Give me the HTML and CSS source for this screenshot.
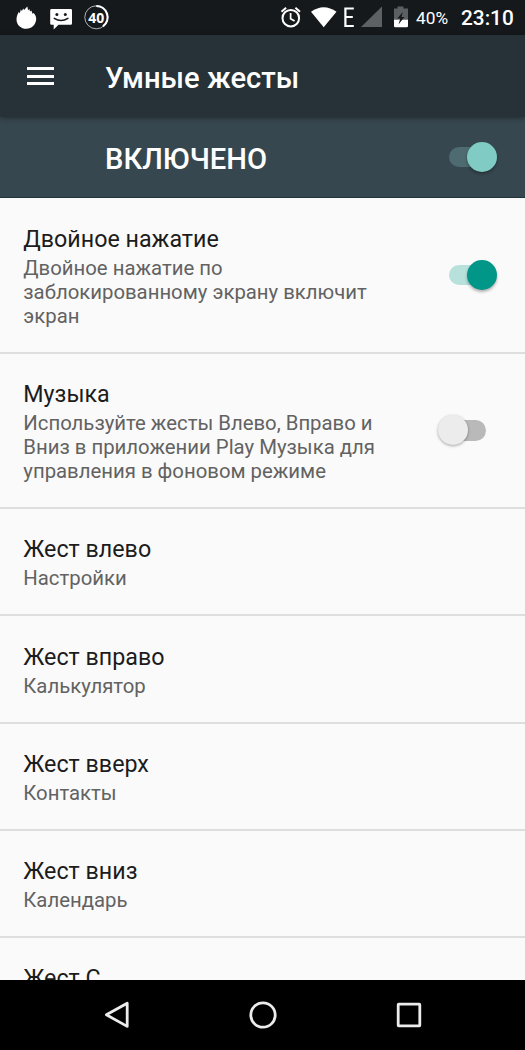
FILE: index.html
```html
<!DOCTYPE html>
<html lang="ru">
<head>
<meta charset="utf-8">
<title>Умные жесты</title>
<link rel="stylesheet" href="styles.css">
</head>
<body>
<div class="screen">
  <div class="status">
    <svg class="status-left" width="110" height="35" viewBox="0 0 110 35">
      <path fill="#fff" d="M16.500 19.500c0-3.500 1.200-5.500 2.300-7.500l1 1.200 1-3.700 1.100 1.500 1.300-2.500.9 1.500 3.200-3.500.8 3.800 1.300-1.300.6 2.600 1.400-1.200 1.100 3.400 1.100-.8c1.900 2 2.700 4.200 2.600 6.300-.4 5.400-4.500 9.500-9.800 9.500S16.500 25.200 16.500 19.500z"/>
      <path fill="#fff" d="M51.500 9h19.200q1.300 0 1.300 1.300v13.200q0 1.300-1.300 1.300H58.500L53.700 29.500V24.800H51.500q-1.300 0-1.300-1.300V10.300Q50.200 9 51.500 9z"/>
      <circle cx="56.900" cy="14.500" r="1.500" fill="#15191c"/><circle cx="65.300" cy="14.500" r="1.500" fill="#15191c"/>
      <path d="M54.300 18.300q6.800 4.600 13.600 0" fill="none" stroke="#15191c" stroke-width="1.500" stroke-linecap="round"/>
      <circle cx="96.300" cy="17.300" r="11.500" fill="none" stroke="#d5d5d5" stroke-width=".8"/>
      <path d="M96.300 6A11.300 11.300 0 0 1 103 26.400" fill="none" stroke="#fff" stroke-width="2.200"/>
      <text class="ring-text" x="96.300" y="22.500" text-anchor="middle" textLength="16" lengthAdjust="spacingAndGlyphs">40</text>
    </svg>
    <svg class="status-right" width="140" height="35" viewBox="275 0 140 35">
      <g fill="none" stroke="#fff" stroke-width="2">
        <circle cx="290.800" cy="18.200" r="8.300"/>
        <path stroke-width="1.700" d="M290.600 13v5.700l4 2.400"/>
        <path d="M281.500 11.700l4.600-4M300 11.700l-4.600-4"/>
      </g>
      <path fill="#fff" d="M311 11.800Q323.700 2.600 336.500 11.800L323.700 27.200z"/>
      <path fill="none" stroke="#fff" stroke-width="2.200" d="M353.800 8.500H345.400V26H353.800M345.400 17H352.800"/>
      <path fill="#5e6163" d="M382 6.500V27H361z"/>
      <path fill="#5c5f61" d="M397.500 6.500h6v2h4.500V20H394V8.500h3.500z"/>
      <path fill="#fff" d="M394 19.700h14V26q0 1.300-1.300 1.300h-11.400Q394 27.300 394 26z"/>
      <path fill="#15191c" d="M402.800 12l-5.500 6.500h3l-1.800 6 5.900-7.500h-3z"/>
    </svg>
    <span class="percent">40%</span>
    <span class="clock">23:10</span>
  </div>
  <header class="appbar">
    <div class="menu"><i></i><i></i><i></i></div>
    <h1>Умные жесты</h1>
  </header>
  <div class="master">
    <span>ВКЛЮЧЕНО</span>
    <div class="switch on dark"><b></b></div>
  </div>
  <main class="list">
    <section class="row tall">
      <div class="copy"><h2>Двойное нажатие</h2><p>Двойное нажатие по<br>заблокированному экрану включит<br>экран</p></div>
      <div class="switch on"><b></b></div>
    </section>
    <section class="row tall">
      <div class="copy"><h2>Музыка</h2><p>Используйте жесты Влево, Вправо и<br>Вниз в приложении Play Музыка для<br>управления в фоновом режиме</p></div>
      <div class="switch off"><b></b></div>
    </section>
    <section class="row"><div class="copy"><h2>Жест влево</h2><p>Настройки</p></div></section>
    <section class="row"><div class="copy"><h2>Жест вправо</h2><p>Калькулятор</p></div></section>
    <section class="row"><div class="copy"><h2>Жест вверх</h2><p>Контакты</p></div></section>
    <section class="row"><div class="copy"><h2>Жест вниз</h2><p>Календарь</p></div></section>
    <section class="row"><div class="copy"><h2>Жест C</h2></div></section>
  </main>
  <nav class="navbar">
    <svg width="30" height="30" viewBox="0 0 30 30"><path d="M25.200 3.200v23.200L4.400 14.800z"/></svg>
    <svg width="30" height="30" viewBox="0 0 30 30"><circle cx="15" cy="15" r="12.200"/></svg>
    <svg width="30" height="30" viewBox="0 0 30 30"><rect x="4.200" y="4.200" width="21.600" height="21.600" rx=".5"/></svg>
  </nav>
</div>
</body>
</html>
```
FILE: styles.css
```css
* { box-sizing: border-box; }
body { margin: 0; font-family: Roboto, "Liberation Sans", sans-serif; }
h1, h2, p { margin: 0; }
.screen { width: 525px; height: 1050px; display: flex; flex-direction: column; overflow: hidden; background: #fafafa; }
.status { height: 35px; flex: none; display: flex; align-items: center; background: #15191c; color: #fff; }
.status svg { flex: none; }
.status-right { margin-left: 165px; }
.ring-text { font: 700 15px "Open Sans", "Noto Sans", sans-serif; fill: #fff; }
.percent { width: 46px; font-size: 17.300px; padding: 2px 0 0 1px; line-height: 33px; }
.clock { font-size: 20.800px; font-weight: 500; line-height: 33px; padding-top: 2px; }
.appbar { height: 82px; flex: none; display: flex; align-items: center; padding-left: 27px; background: #263238; color: #fff; box-shadow: 0 1px 5px rgba(0,0,0,.4); z-index: 1; }
.menu { width: 27px; display: flex; flex-direction: column; gap: 4.500px; margin-right: 51px; }
.menu i { height: 3px; background: #fff; }
.appbar h1 { font-size: 29.170px; font-weight: 500; line-height: 34px; padding-top: 4px; }
.master { height: 81px; flex: none; display: flex; align-items: center; justify-content: space-between; padding: 0 28px 0 105px; background: #37474f; color: #fff; font-size: 29.170px; font-weight: 500; border-bottom: 1px solid #22323a; }
.master span { padding-top: 4px; }
.list { flex: 1; min-height: 0; overflow: hidden; padding-top: .8px; }
.row { height: 107.200px; display: flex; align-items: flex-start; justify-content: space-between; padding: 26.200px 28px 0 23.300px; border-bottom: 2px solid #dedede; }
.row.tall { height: 155.200px; }
.row h2 { font-size: 23.250px; font-weight: 400; line-height: 28px; color: #1c1c1c; white-space: nowrap; }
.row p { margin-top: 3px; font-size: 20.330px; line-height: 24px; color: #626262; white-space: nowrap; }
.switch { position: relative; flex: none; width: 48px; height: 30px; display: flex; align-items: center; }
.switch::before { content: ""; width: 37px; height: 20.500px; border-radius: 11px; background: #b8e1dc; }
.switch b { position: absolute; right: 0; top: 0; width: 30px; height: 30px; border-radius: 50%; background: #009688; box-shadow: 0 2px 3px rgba(0,0,0,.3); }
.switch.dark::before { background: #4d6b70; }
.switch.dark b { background: #80cbc4; }
.row .switch { margin-top: 35.200px; }
.switch.off { width: 59px; }
.switch.off::before { margin-left: 11px; background: #b9b9b9; }
.switch.off b { right: auto; left: 0; background: #ececec; box-shadow: 0 1px 3px rgba(0,0,0,.35); }
.navbar { height: 70px; flex: none; display: flex; justify-content: center; align-items: center; gap: 116px; background: #000; }
.navbar svg { fill: none; stroke: #ececec; stroke-width: 2.800; stroke-linejoin: round; }
```
